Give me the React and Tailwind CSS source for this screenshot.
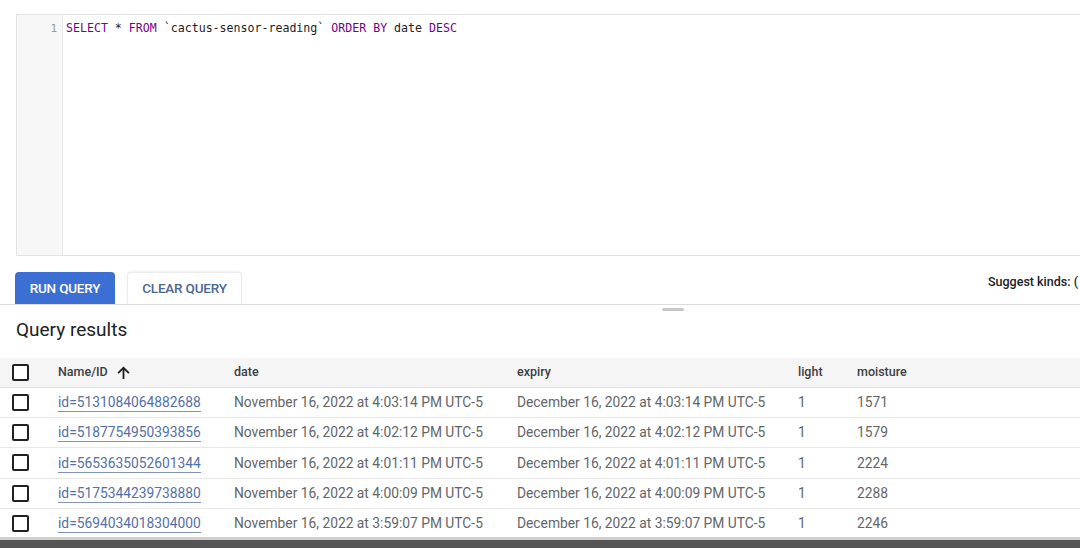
import React from 'react';

const rows = [
    { id: '5131084064882688', date: '4:03:14', moisture: '1571' },
    { id: '5187754950393856', date: '4:02:12', moisture: '1579' },
    { id: '5653635052601344', date: '4:01:11', moisture: '2224' },
    { id: '5175344239738880', date: '4:00:09', moisture: '2288' },
    { id: '5694034018304000', date: '3:59:07', moisture: '2246' },
];

const Checkbox = () => (
    <div className="w-[17px] h-[17px] border-[2.5px] border-[#202124] rounded-[2px] bg-white"></div>
);

const cols = 'grid grid-cols-[58px_176px_283px_281px_59px_1fr] items-center';

const App = () => {
    return (
        <div className="w-[1080px] h-[548px] bg-white overflow-hidden flex flex-col font-['Roboto',sans-serif] text-[#62666a]">
            {/* Editor */}
            <div className="shrink-0 mt-[14px] ml-[16px] h-[242px] flex border border-[#e3e3e3] border-r-0">
                <div className="w-[46px] bg-[#f7f7f7] border-r border-[#e6e6e6] text-right pr-[5px] pt-[6px] font-['DejaVu_Sans_Mono',monospace] text-[11px] text-[#999]">1</div>
                <div className="pl-[3px] pt-[6px] font-['DejaVu_Sans_Mono',monospace] text-[11.6px] leading-[15px] text-[#222] whitespace-pre">
                    <span className="text-[#770088]">SELECT</span> * <span className="text-[#770088]">FROM</span> `cactus-sensor-reading` <span className="text-[#770088]">ORDER BY</span> date <span className="text-[#770088]">DESC</span>
                </div>
            </div>

            {/* Buttons */}
            <div className="shrink-0 mt-[16px] flex items-end border-b border-[#dadce0] relative">
                <button className="ml-[15px] h-[32px] w-[100px] bg-[#3b6fd4] text-white text-[13.5px] font-medium rounded-t-[4px] tracking-[-0.2px]">RUN QUERY</button>
                <button className="ml-[12px] h-[32px] w-[115px] bg-white text-[#4d6793] text-[13.5px] font-medium rounded-t-[4px] border border-b-0 border-[#ececec] shadow-[0_-1px_2px_rgba(0,0,0,0.06)] tracking-[-0.2px]">CLEAR QUERY</button>
                <div className="ml-auto self-start mt-[1px] text-[12.5px] font-medium text-[#202124] whitespace-nowrap w-[92px] overflow-hidden">Suggest kinds: (</div>
                <div className="absolute left-[662px] top-[36px] w-[22px] h-[3px] rounded bg-[#c8c8c8]"></div>
            </div>

            <div className="shrink-0 mt-[14px] ml-[16px] text-[19px] text-[#202124] leading-[22px]">Query results</div>

            {/* Table */}
            <div className="shrink-0 mt-[17px] text-[13.8px]">
                <div className={`${cols} h-[30px] bg-[#f5f5f5] border-b border-[#e0e0e0] text-[12.5px] font-medium text-[#3c4043]`}>
                    <div className="pl-[12px]"><Checkbox /></div>
                    <div className="flex items-center gap-[7px]">
                        Name/ID
                        <svg width="17" height="17" viewBox="0 0 24 24" fill="#202124"><path d="M3.5 12l1.8 1.8L10.7 8.4V21h2.6V8.4l5.4 5.4 1.8-1.8-8.5-8.5-8.5 8.5z" /></svg>
                    </div>
                    <div>date</div>
                    <div>expiry</div>
                    <div>light</div>
                    <div>moisture</div>
                </div>
                {rows.map((r) => (
                    <div key={r.id} className={`${cols} h-[30.2px] border-b border-[#e8e8e8]`}>
                        <div className="pl-[12px]"><Checkbox /></div>
                        <div><span className="text-[#5470a6] border-b border-[#8394b3] pb-[1px]">id={r.id}</span></div>
                        <div>November 16, 2022 at {r.date} PM UTC-5</div>
                        <div>December 16, 2022 at {r.date} PM UTC-5</div>
                        <div>1</div>
                        <div>{r.moisture}</div>
                    </div>
                ))}
            </div>

            {/* Scrollbar */}
            <div className="shrink-0 relative -mt-[2px] h-[3px] bg-[#d0d0d0]"></div>
            <div className="shrink-0 h-[8px] bg-[#555]"></div>
        </div>
    );
};

export default App;
